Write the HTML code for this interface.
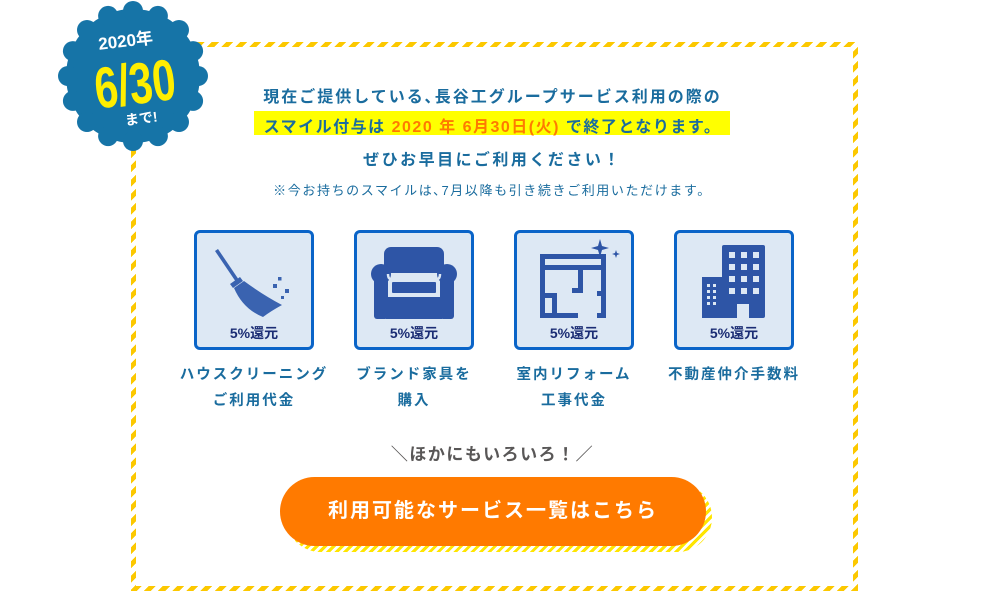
<!DOCTYPE html>
<html><head><meta charset="utf-8"><style>
*{margin:0;padding:0;box-sizing:border-box}
body{width:985px;height:601px;background:#fff;position:relative;overflow:hidden;font-family:"Liberation Sans","Noto Sans CJK JP",sans-serif;font-weight:bold}
.frame{position:absolute;left:131px;top:42px;width:727px;height:549px;background:repeating-linear-gradient(-45deg,#fcc800 0 5px,#fff 5px 10px)}
.inner{position:absolute;left:5px;top:5px;right:5px;bottom:5px;background:#fff}
.t{position:absolute;left:0;width:985px;text-align:center;color:#1a6c9e;white-space:nowrap}
.hl{position:absolute;left:254px;top:111px;width:476px;height:24px;background:#ffff00}
.card{position:absolute;top:230px;width:120px;height:120px;border:3px solid #0a64c8;border-radius:6px;background:#dde8f4}
.card .lb{position:absolute;left:0;right:0;bottom:4px;text-align:center;color:#1b2d74;font-size:14px}
.card svg{position:absolute;left:0;top:0}
.cap{position:absolute;top:362px;width:170px;text-align:center;color:#1a6c9e;font-size:14.5px;line-height:26px;letter-spacing:2px}
.btnsh{position:absolute;left:286px;top:483px;width:426px;height:69px;border-radius:35px;background:repeating-linear-gradient(-45deg,#ffe500 0 3px,#fff 3px 6px)}
.btn{position:absolute;left:280px;top:477px;width:426px;height:69px;border-radius:35px;background:#ff7a00;color:#fff;font-size:20px;text-align:center;line-height:69px;letter-spacing:2px}
</style></head><body>
<div class="frame"><div class="inner"></div></div>

<svg style="position:absolute;left:0;top:0" width="260" height="170">
<g fill="#1674a7" transform="translate(133,76)">
<circle r="67"/>
<circle cx="65" cy="0" r="10"/><circle cx="60.1" cy="24.9" r="10"/><circle cx="46" cy="46" r="10"/><circle cx="24.9" cy="60.1" r="10"/><circle cx="0" cy="65" r="10"/><circle cx="-24.9" cy="60.1" r="10"/><circle cx="-46" cy="46" r="10"/><circle cx="-60.1" cy="24.9" r="10"/><circle cx="-65" cy="0" r="10"/>
<circle cx="60.1" cy="-24.9" r="10"/><circle cx="46" cy="-46" r="10"/><circle cx="24.9" cy="-60.1" r="10"/><circle cx="0" cy="-65" r="10"/><circle cx="-24.9" cy="-60.1" r="10"/><circle cx="-46" cy="-46" r="10"/><circle cx="-60.1" cy="-24.9" r="10"/>
</g>
<g transform="rotate(-7 133 76)" text-anchor="middle" font-family="Liberation Sans,Noto Sans CJK JP,sans-serif" font-weight="bold">
<text x="130" y="46" fill="#fff" font-size="17">2020年</text>
<text x="0" y="0" fill="#ffee00" font-size="58" transform="translate(134 104) scale(0.72 1)">6/30</text>
<text x="136" y="124" fill="#fff" font-size="14">まで!</text>
</g>
</svg>

<div class="t" style="top:83px;font-size:16px;letter-spacing:2px">現在ご提供している､長谷工グループサービス利用の際の</div>
<div class="hl"></div>
<div class="t" style="top:113px;font-size:16px;letter-spacing:1.5px">スマイル付与は <span style="color:#ff7a00">2020 年 6月30日(火)</span> で終了となります。</div>
<div class="t" style="top:146px;font-size:16px;letter-spacing:2.5px">ぜひお早目にご利用ください！</div>
<div class="t" style="top:180px;font-size:13px;font-weight:normal;letter-spacing:1.6px">※今お持ちのスマイルは､7月以降も引き続きご利用いただけます。</div>

<div class="card" style="left:194px"><svg width="114" height="114"><g fill="#3a63b0"><path d="M18 18 L21 16 L42 47 L39 49 Z"/><path d="M33 51 L43 44 L46 48 L36 55 Z"/><path d="M37 55 L47 48 Q66 62 85 72 Q74 78 66 84 Q46 76 37 55 Z"/><rect x="81" y="44" width="3.5" height="3.5"/><rect x="76" y="51" width="4" height="4"/><rect x="88" y="56" width="4" height="4"/><rect x="84" y="63" width="3" height="3"/></g></svg><div class="lb">5%還元</div></div>
<div class="card" style="left:354px"><svg width="114" height="114"><g fill="#2e55a6"><rect x="27" y="14" width="60" height="26" rx="7"/><circle cx="24" cy="41" r="10"/><circle cx="90" cy="41" r="10"/><rect x="17" y="41" width="14" height="45" rx="3"/><rect x="83" y="41" width="14" height="45" rx="3"/><rect x="29" y="64" width="56" height="22"/><rect x="35" y="49" width="44" height="11" rx="1"/></g><path d="M31 41 Q31 45 33 46 H81 Q83 45 83 41" fill="none" stroke="#dde8f4" stroke-width="2.5"/></svg><div class="lb">5%還元</div></div>
<div class="card" style="left:514px"><svg width="114" height="114"><g fill="#2e55a6"><path d="M23 21 H89 V85 H80 V80 H84 V63 H80 V58 H84 V37 H66 V60 H55 V55 H61 V37 H28 V60 H40 V85 H23 Z M28 26 V32 H84 V26 Z M28 65 V80 H35 V65 Z"/><path d="M40 80 H61 V85 H40 Z"/><path d="M83 6 L85 13 L92 15 L85 17 L83 24 L81 17 L74 15 L81 13 Z"/><path d="M99 17 L100 20 L103 21 L100 22 L99 25 L98 22 L95 21 L98 20 Z"/></g></svg><div class="lb">5%還元</div></div>
<div class="card" style="left:674px"><svg width="114" height="114"><g fill="#2e55a6"><rect x="45" y="12" width="43" height="73" rx="2"/><rect x="25" y="44" width="22" height="41"/></g><g fill="#dde8f4"><rect x="52" y="19" width="6" height="6"/><rect x="64" y="19" width="6" height="6"/><rect x="76" y="19" width="6" height="6"/><rect x="52" y="31" width="6" height="6"/><rect x="64" y="31" width="6" height="6"/><rect x="76" y="31" width="6" height="6"/><rect x="52" y="43" width="6" height="6"/><rect x="64" y="43" width="6" height="6"/><rect x="76" y="43" width="6" height="6"/><rect x="52" y="55" width="6" height="6"/><rect x="64" y="55" width="6" height="6"/><rect x="76" y="55" width="6" height="6"/><rect x="60" y="71" width="12" height="14"/><rect x="30" y="51" width="3" height="3"/><rect x="36" y="51" width="3" height="3"/><rect x="30" y="57" width="3" height="3"/><rect x="36" y="57" width="3" height="3"/><rect x="30" y="63" width="3" height="3"/><rect x="36" y="63" width="3" height="3"/><rect x="30" y="69" width="3" height="3"/><rect x="36" y="69" width="3" height="3"/></g></svg><div class="lb">5%還元</div></div>

<div class="cap" style="left:169px">ハウスクリーニング<br>ご利用代金</div>
<div class="cap" style="left:329px">ブランド家具を<br>購入</div>
<div class="cap" style="left:489px">室内リフォーム<br>工事代金</div>
<div class="cap" style="left:649px">不動産仲介手数料</div>

<div class="t" style="top:440px;font-size:17px;color:#595757;letter-spacing:1.5px">＼ほかにもいろいろ！／</div>

<div class="btnsh"></div>
<div class="btn">利用可能なサービス一覧はこちら</div>
</body></html>
